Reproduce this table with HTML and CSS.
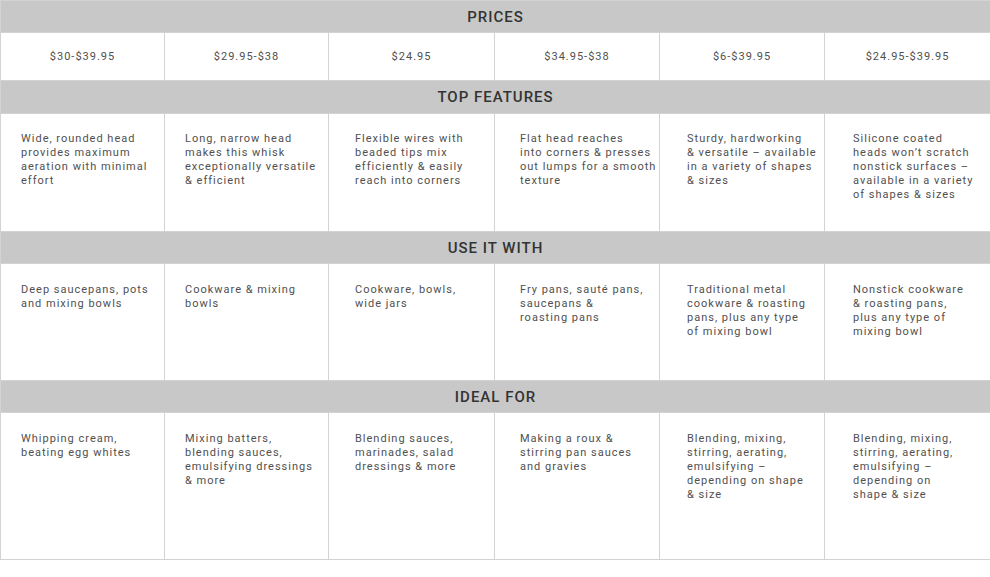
FILE: index.html
```html
<!DOCTYPE html>
<html lang="en">
<head>
<meta charset="utf-8">
<title>Whisk comparison</title>
<link rel="stylesheet" href="styles.css">
</head>
<body>
<table class="compare">
  <colgroup>
    <col class="c1"><col class="c2"><col class="c3"><col class="c4"><col class="c5"><col class="c6">
  </colgroup>
  <tr class="head head-first"><th colspan="6">PRICES</th></tr>
  <tr class="prices">
    <td>$30-$39.95</td>
    <td>$29.95-$38</td>
    <td>$24.95</td>
    <td>$34.95-$38</td>
    <td>$6-$39.95</td>
    <td>$24.95-$39.95</td>
  </tr>
  <tr class="head head-tall"><th colspan="6">TOP FEATURES</th></tr>
  <tr class="body features">
    <td>Wide, rounded head<br>provides maximum<br>aeration with minimal<br>effort</td>
    <td>Long, narrow head<br>makes this whisk<br>exceptionally versatile<br>&amp; efficient</td>
    <td>Flexible wires with<br>beaded tips mix<br>efficiently &amp; easily<br>reach into corners</td>
    <td>Flat head reaches<br>into corners &amp; presses<br>out lumps for a smooth<br>texture</td>
    <td>Sturdy, hardworking<br>&amp; versatile – available<br>in a variety of shapes<br>&amp; sizes</td>
    <td>Silicone coated<br>heads won’t scratch<br>nonstick surfaces –<br>available in a variety<br>of shapes &amp; sizes</td>
  </tr>
  <tr class="head"><th colspan="6">USE IT WITH</th></tr>
  <tr class="body use">
    <td>Deep saucepans, pots<br>and mixing bowls</td>
    <td>Cookware &amp; mixing<br>bowls</td>
    <td>Cookware, bowls,<br>wide jars</td>
    <td>Fry pans, sauté pans,<br>saucepans &amp;<br>roasting pans</td>
    <td>Traditional metal<br>cookware &amp; roasting<br>pans, plus any type<br>of mixing bowl</td>
    <td>Nonstick cookware<br>&amp; roasting pans,<br>plus any type of<br>mixing bowl</td>
  </tr>
  <tr class="head"><th colspan="6">IDEAL FOR</th></tr>
  <tr class="body ideal">
    <td>Whipping cream,<br>beating egg whites</td>
    <td>Mixing batters,<br>blending sauces,<br>emulsifying dressings<br>&amp; more</td>
    <td>Blending sauces,<br>marinades, salad<br>dressings &amp; more</td>
    <td>Making a roux &amp;<br>stirring pan sauces<br>and gravies</td>
    <td>Blending, mixing,<br>stirring, aerating,<br>emulsifying –<br>depending on shape<br>&amp; size</td>
    <td>Blending, mixing,<br>stirring, aerating,<br>emulsifying –<br>depending on<br>shape &amp; size</td>
  </tr>
</table>
</body>
</html>
```

FILE: styles.css
```css
html, body {
  margin: 0;
  padding: 0;
  background: #ffffff;
}

.compare {
  width: 990px;
  border-collapse: collapse;
  table-layout: fixed;
  font-family: Roboto, "Liberation Sans", sans-serif;
  color: #505050;
}

.compare .c1 { width: 164px; }
.compare .c2 { width: 164px; }
.compare .c3 { width: 166px; }
.compare .c4 { width: 165px; }
.compare .c5 { width: 165px; }
.compare .c6 { width: 166px; }

.compare th,
.compare td {
  border: 1px solid #d3d3d3;
  padding: 0;
}

.head th {
  background: #c8c8c8;
  height: 31px;
  font-size: 15px;
  font-weight: 500;
  letter-spacing: 1px;
  color: #333333;
  text-align: center;
  vertical-align: middle;
}

.head-tall th { height: 32px; }

.prices td {
  height: 47px;
  font-size: 11px;
  letter-spacing: 1px;
  text-align: center;
  vertical-align: middle;
}

.body td {
  font-size: 11px;
  line-height: 14px;
  letter-spacing: 1px;
  text-align: left;
  vertical-align: top;
  padding-top: 18px;
  padding-left: 20px;
  white-space: nowrap;
}

.body td:nth-child(3) { padding-left: 26px; }
.body td:nth-child(4) { padding-left: 25px; }
.body td:nth-child(5) { padding-left: 27px; }
.body td:nth-child(6) { padding-left: 28px; }

.features td { height: 99px; }
.use td { height: 97px; padding-top: 19px; }
.ideal td { height: 127px; padding-top: 19px; }
```
